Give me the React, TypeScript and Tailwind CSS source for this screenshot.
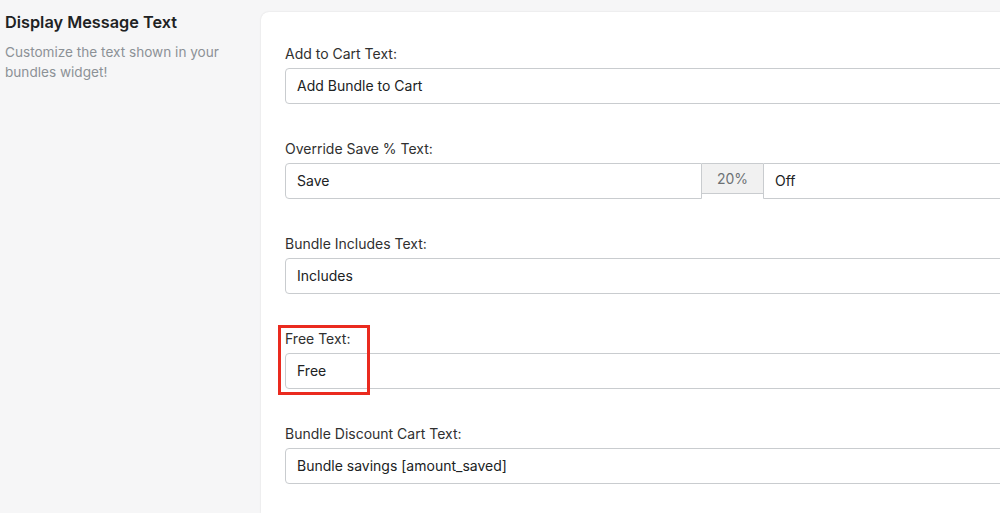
import React from "react";

function Label({ children }: { children: React.ReactNode }) {
  return <div className="text-[14px] leading-[20px] text-[#303030]">{children}</div>;
}

function TextInput({ value }: { value: string }) {
  return (
    <div className="mt-[4px] h-[36px] flex items-center rounded-[4px] border border-[#c9cccf] bg-white px-[11px] pb-[1px] text-[14px] text-[#202223]">
      {value}
    </div>
  );
}

export default function App() {
  return (
    <div
      className="w-[1000px] h-[513px] overflow-hidden bg-[#f6f6f7]"
      style={{ fontFamily: "Inter, 'Noto Sans', sans-serif" }}
    >
      <div className="flex w-[1060px] h-full">
        <div className="w-[261px] shrink-0 pl-[5px] pt-[10px] pr-[20px]">
          <h2 className="text-[16.3px] leading-[24px] font-semibold text-[#202223]">Display Message Text</h2>
          <p className="mt-[8px] text-[13.6px] leading-[20px] text-[#8c9196]">
            Customize the text shown in your bundles widget!
          </p>
        </div>
        <div className="flex-1 mt-[12px] rounded-tl-[8px] bg-white shadow-[0_0_2px_rgba(0,0,0,0.12)] pl-[24px] pr-[24px] pt-[32px]">
          <div className="flex flex-col gap-[35px]">
            <div>
              <Label>Add to Cart Text:</Label>
              <TextInput value="Add Bundle to Cart" />
            </div>
            <div>
              <Label>Override Save % Text:</Label>
              <div className="mt-[4px] flex items-start h-[36px]">
                <div className="w-[417px] h-[36px] flex items-center rounded-l-[4px] border border-[#c9cccf] bg-white px-[11px] pb-[1px] text-[14px] text-[#202223]">
                  Save
                </div>
                <div className="w-[61px] h-[31px] flex items-center justify-center border-t border-b border-[#c9cccf] bg-[#f1f1f1] text-[14px] text-[#6d7175] pb-[1px]">
                  20%
                </div>
                <div className="flex-1 h-[36px] flex items-center rounded-r-[4px] border border-[#c9cccf] bg-white px-[11px] pb-[1px] text-[14px] text-[#202223]">
                  Off
                </div>
              </div>
            </div>
            <div>
              <Label>Bundle Includes Text:</Label>
              <TextInput value="Includes" />
            </div>
            <div className="relative">
              <Label>Free Text:</Label>
              <TextInput value="Free" />
              <div className="absolute -top-[4px] -left-[7px] w-[92px] h-[70px] border-[3px] border-[#ea2a1f]" />
            </div>
            <div>
              <Label>Bundle Discount Cart Text:</Label>
              <TextInput value="Bundle savings [amount_saved]" />
            </div>
          </div>
        </div>
      </div>
    </div>
  );
}
